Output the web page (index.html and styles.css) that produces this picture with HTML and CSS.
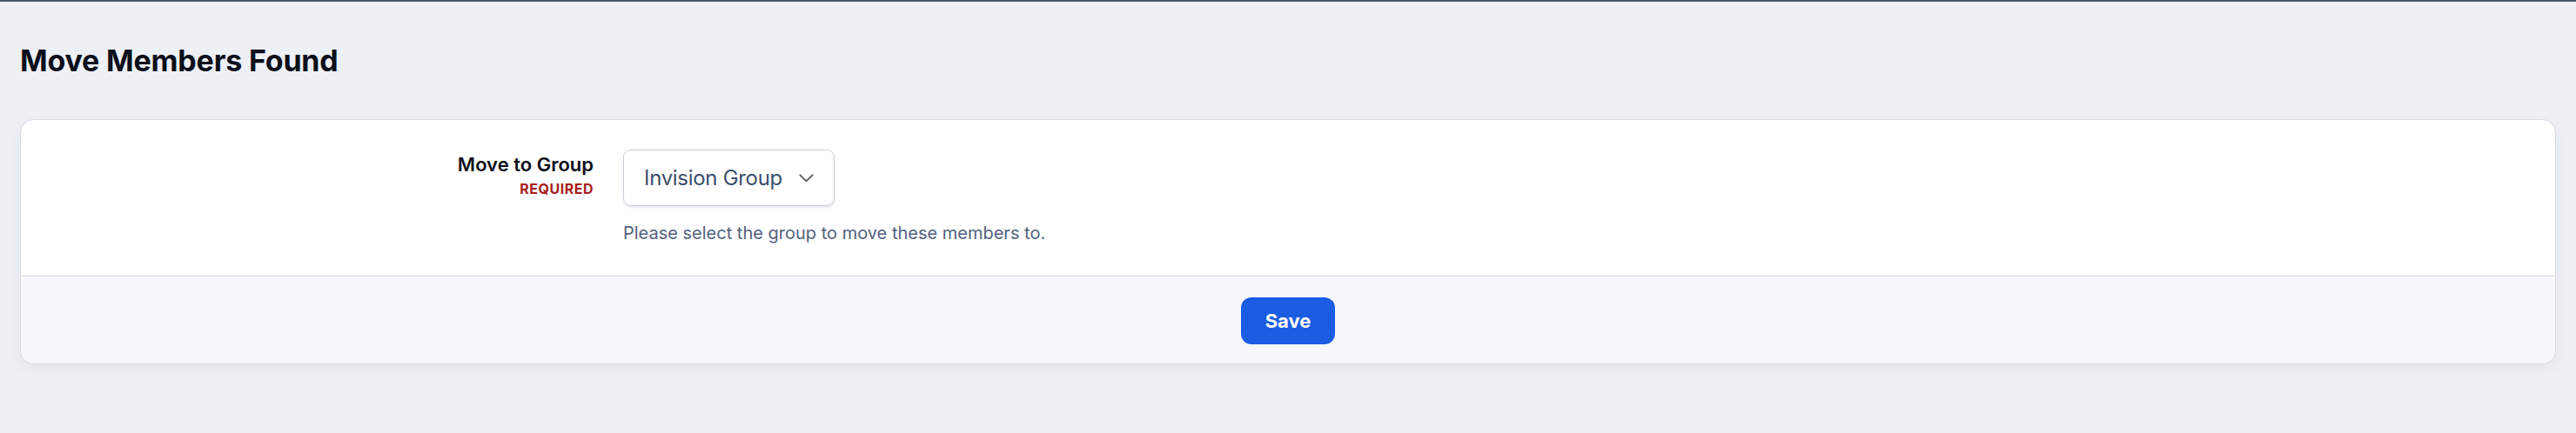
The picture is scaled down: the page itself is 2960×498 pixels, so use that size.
FILE: index.html
```html
<!DOCTYPE html>
<html lang="en">
  <head>
    <meta charset="UTF-8" />
    <meta name="viewport" content="width=device-width, initial-scale=1.0" />
    <title>Move Members Found</title>
    <link rel="stylesheet" href="styles.css">
  </head>
  <body>
    <div class="page">
      <h1>Move Members Found</h1>
      <form class="card">
        <div class="form-row">
          <div class="field-label">
            <label for="group">Move to Group</label>
            <span class="required">Required</span>
          </div>
          <div class="field-input">
            <div class="select" id="group">
              <span>Invision Group</span>
              <svg width="17" height="10" viewBox="0 0 17 10" fill="none">
                <path
                  d="M1.5 1.5L8.5 8.2L15.5 1.5"
                  stroke="currentColor"
                  stroke-width="2.2"
                  stroke-linecap="round"
                  stroke-linejoin="round"
                />
              </svg>
            </div>
            <p class="help">Please select the group to move these members to.</p>
          </div>
        </div>
        <div class="form-footer">
          <button type="button">Save</button>
        </div>
      </form>
    </div>
  </body>
</html>
```

FILE: styles.css
```css
body {
  font-family: Inter, "Noto Sans", sans-serif;
  background-color: #edf0f5;
  color: #0b0f19;
  margin: 0;
  padding: 0;
  border-top: 2px solid #4a5670;
}

.page {
  padding: 47px 23px 60px;
}

h1 {
  font-size: 34px;
  font-weight: 700;
  line-height: 41px;
  margin: 0 0 47px;
  letter-spacing: -0.2px;
}

.card {
  background-color: #fff;
  border: 1px solid #d6dbe4;
  border-radius: 16px;
  box-shadow: 0 6px 14px rgba(30, 40, 60, 0.05);
  overflow: hidden;
}

.form-row {
  display: grid;
  grid-template-columns: 658px 1fr;
  column-gap: 34px;
  padding: 34px 0;
}

.field-label {
  text-align: right;
  display: flex;
  flex-direction: column;
  align-items: flex-end;
  padding-top: 3px;
}

.field-label label {
  font-size: 22px;
  font-weight: 600;
  line-height: 28px;
  color: #0b0f19;
}

.required {
  margin-top: 5px;
  font-size: 16px;
  font-weight: 700;
  line-height: 19px;
  letter-spacing: 0.5px;
  text-transform: uppercase;
  color: #a81d1d;
}

.select {
  display: flex;
  align-items: center;
  justify-content: space-between;
  width: 243px;
  height: 65px;
  box-sizing: border-box;
  padding: 0 23px 0 23px;
  border: 1px solid #c9ced8;
  border-radius: 9px;
  background-color: #fff;
  box-shadow: 0 2px 3px rgba(20, 30, 50, 0.1);
  font-size: 24px;
  letter-spacing: -0.3px;
  color: #3d4e6c;
}

.select svg {
  color: #6f6f6f;
}

.help {
  margin: 16px 0 0;
  font-size: 20px;
  line-height: 30px;
  color: #52617e;
}

.form-footer {
  display: flex;
  justify-content: center;
  padding: 24px 0 22px;
  border-top: 1px solid #d6dbe4;
  background-color: #f6f7fb;
}

button {
  height: 54px;
  padding: 0 28px;
  border: none;
  border-radius: 12px;
  background-color: #1b5ce3;
  color: #fff;
  font-family: inherit;
  font-size: 22px;
  font-weight: 700;
  cursor: pointer;
}
```
